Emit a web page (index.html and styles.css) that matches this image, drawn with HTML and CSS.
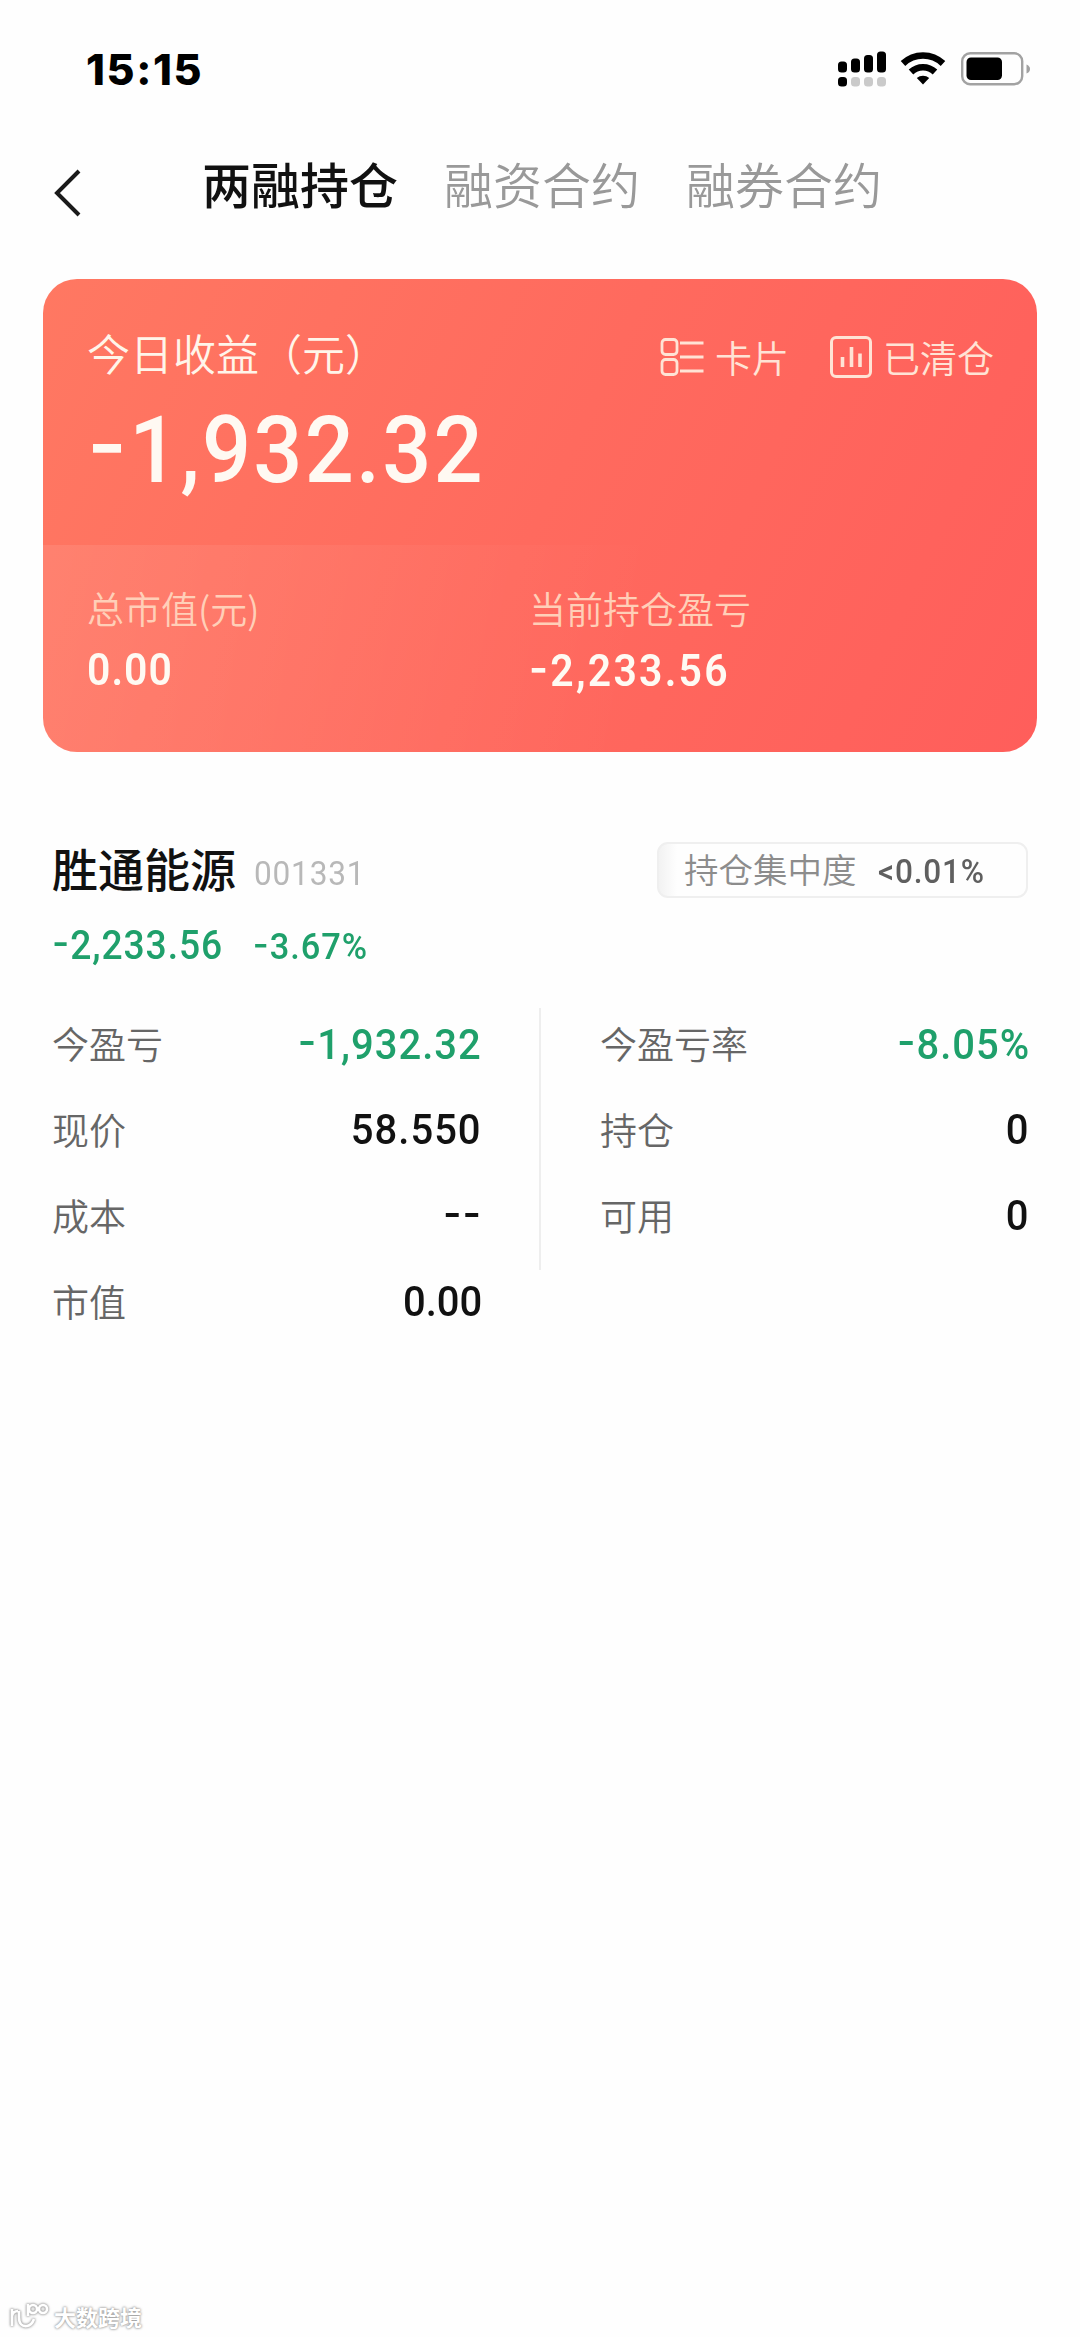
FILE: index.html
```html
<!DOCTYPE html>
<html lang="zh-CN">
<head>
  <meta charset="UTF-8">
  <meta name="viewport" content="width=device-width, initial-scale=1.0">
  <title>两融持仓</title>
  <link rel="stylesheet" href="styles.css">
</head>
<body>
  <!-- Status bar -->
  <header class="status-bar">
    <span class="time">15:15</span>
    <div class="status-icons">
      <svg class="signal" width="48" height="36" viewBox="0 0 48 36">
        <rect x="0" y="10.500" width="9" height="11" rx="3.500"/>
        <rect x="13" y="7.500" width="9" height="14" rx="3.500"/>
        <rect x="26" y="4" width="9" height="17.500" rx="3.500"/>
        <rect x="39" y="0.500" width="9" height="21" rx="3.500"/>
        <rect x="0" y="26" width="9" height="9.500" rx="3.500"/>
        <g fill="#cacaca">
          <rect x="13" y="26" width="9" height="9.500" rx="3.500"/>
          <rect x="26" y="26" width="9" height="9.500" rx="3.500"/>
          <rect x="39" y="26" width="9" height="9.500" rx="3.500"/>
        </g>
      </svg>
      <svg class="wifi" width="46" height="34" viewBox="0 0 46 34">
        <path d="M3 12.500a29 29 0 0 1 40 0M11 21a17.500 17.500 0 0 1 24 0" fill="none" stroke="#000" stroke-width="6.600"/>
        <path d="M16.800 27a9.500 9.500 0 0 1 12.400 0L23 33.500z"/>
      </svg>
      <svg class="battery" width="70" height="34" viewBox="0 0 70 34">
        <rect x="1.200" y="1.200" width="60" height="31" rx="8" fill="none" stroke="#a2a2a2" stroke-width="2.400"/>
        <rect x="5.500" y="5.500" width="35.500" height="22.500" rx="4.500"/>
        <path d="M65.500 12.500q3.500 1.500 3.500 4.500t-3.500 4.500z" fill="#a2a2a2"/>
      </svg>
    </div>
  </header>

  <!-- Nav tabs -->
  <nav class="nav">
    <svg class="back" width="28" height="48" viewBox="0 0 28 48">
      <path d="M25 2L3 24l22 22" fill="none" stroke="#1a1a1a" stroke-width="4"/>
    </svg>
    <div class="tabs">
      <span class="tab active">两融持仓</span>
      <span class="tab">融资合约</span>
      <span class="tab">融券合约</span>
    </div>
  </nav>

  <!-- Profit card -->
  <section class="card">
    <div class="card-top">
      <div class="card-head">
        <h1>今日收益（元）</h1>
        <div class="actions">
          <span class="action">
            <svg width="44" height="42" viewBox="0 0 44 42" fill="none" stroke="currentColor" stroke-width="2.800">
              <rect x="2" y="3.500" width="15" height="15" rx="3.500"/>
              <rect x="2" y="23.500" width="15" height="15" rx="3.500"/>
              <path d="M20 7h23.500M20 21h23.500M20 35h23.500"/>
            </svg>
            卡片
          </span>
          <span class="action">
            <svg width="42" height="42" viewBox="0 0 42 42" fill="none" stroke="currentColor" stroke-width="3">
              <rect x="1.500" y="1.500" width="39" height="39" rx="4.500"/>
              <path d="M12.500 21v10M21.500 11v20M30 17.500v13.500" stroke-width="3.600"/>
            </svg>
            已清仓
          </span>
        </div>
      </div>
      <div class="total num"><i>-</i>1,932.32</div>
    </div>
    <div class="card-bottom">
      <div class="stat">
        <span class="stat-label">总市值(元)</span>
        <span class="stat-value num">0.00</span>
      </div>
      <div class="stat">
        <span class="stat-label">当前持仓盈亏</span>
        <span class="stat-value num wide"><i>-</i>2,233.56</span>
      </div>
    </div>
  </section>

  <!-- Holding -->
  <section class="holding">
    <div class="holding-head">
      <h2>胜通能源</h2>
      <span class="code num">001331</span>
      <div class="badge">
        <span>持仓集中度</span>
        <span class="badge-value num">&lt;0.01%</span>
      </div>
    </div>
    <div class="holding-profit num">
      <span><i>-</i>2,233.56</span>
      <span class="rate"><i>-</i>3.67%</span>
    </div>
    <div class="details">
      <div class="column">
        <div class="row"><span>今盈亏</span><b class="num green"><i>-</i>1,932.32</b></div>
        <div class="row"><span>现价</span><b class="num">58.550</b></div>
        <div class="row"><span>成本</span><b class="num"><i>--</i></b></div>
        <div class="row"><span>市值</span><b class="num tight">0.00</b></div>
      </div>
      <div class="divider"></div>
      <div class="column">
        <div class="row"><span>今盈亏率</span><b class="num green"><i>-</i>8.05%</b></div>
        <div class="row"><span>持仓</span><b class="num">0</b></div>
        <div class="row"><span>可用</span><b class="num">0</b></div>
      </div>
    </div>
  </section>

  <!-- Watermark -->
  <footer class="watermark">
    <svg width="40" height="28" viewBox="0 0 40 28" fill="none" stroke="#fff" stroke-width="2.600">
      <path d="M2 7v17M2 14q1-5 6-5M9 9v6q0 10 8 9 5-1 7-7M18 2v12"/>
      <circle cx="23" cy="7" r="4"/>
      <circle cx="33" cy="7" r="4"/>
    </svg>
    <span>大数跨境</span>
  </footer>
</body>
</html>
```
FILE: styles.css
```css
* {
  box-sizing: border-box;
  margin: 0;
  padding: 0;
}

body {
  display: flex;
  flex-direction: column;
  width: 1080px;
  height: 2337px;
  background: #fefefe;
  font-family: "Noto Sans CJK SC", sans-serif;
  color: #111;
  overflow: hidden;
}

svg {
  display: block;
  flex-shrink: 0;
}

/* condensed digits */
.num {
  font-family: Roboto, sans-serif;
  letter-spacing: 0.025em;
  transform: scaleX(0.93);
  transform-origin: left;
}

/* wider minus sign than the digits' own font has */
.num i {
  font-family: Inter, sans-serif;
  font-style: normal;
  font-feature-settings: "case";
}

.num.wide {
  letter-spacing: 0.055em;
}

.num.tight {
  letter-spacing: 0;
}

/* Status bar */
.status-bar {
  display: flex;
  justify-content: space-between;
  height: 137px;
  padding: 51px 49px 0 86px;
}

.time {
  font-family: Inter, sans-serif;
  font-size: 43px;
  font-weight: 800;
  line-height: 36px;
  letter-spacing: 1.6px;
  color: #000;
}

.status-icons {
  display: flex;
}

.wifi {
  margin-left: 14px;
}

.battery {
  margin-left: 15px;
  margin-top: 1px;
}

/* Nav tabs */
.nav {
  display: flex;
  align-items: center;
  height: 112px;
  padding-left: 54px;
}

.tabs {
  display: flex;
  gap: 46px;
  margin-left: 120px;
  padding-bottom: 20px;
}

.tab {
  font-size: 49px;
  font-weight: 350;
  line-height: 60px;
  color: #999;
}

.tab.active {
  font-weight: 500;
  color: #111;
}

/* Profit card */
.card {
  height: 473px;
  margin: 30px 43px 0;
  border-radius: 34px;
  overflow: hidden;
  background: linear-gradient(115deg, #ff7862 0%, #ff6a5e 50%, #ff5e5b 100%);
  color: #fff5ea;
}

.card-top {
  height: 266px;
  padding: 43px 43px 0 44px;
}

.card-head {
  display: flex;
  justify-content: space-between;
}

h1 {
  font-size: 43px;
  font-weight: 350;
  line-height: 60px;
}

.actions {
  display: flex;
  gap: 41px;
  padding-top: 4px;
}

.action {
  display: flex;
  align-items: center;
  gap: 11px;
  height: 62px;
  font-size: 37px;
  font-weight: 350;
  color: #ffe3d5;
}

.total {
  margin-top: 10px;
  font-size: 93px;
  font-weight: 500;
  line-height: 100px;
  color: #fff9f2;
}

.card-bottom {
  display: flex;
  height: 207px;
  padding: 38px 44px 0;
  background: linear-gradient(100deg, rgba(255, 255, 255, 0.09), rgba(255, 255, 255, 0) 60%);
}

.stat {
  display: flex;
  flex-direction: column;
  width: 442px;
}

.stat-label {
  font-size: 37px;
  font-weight: 350;
  line-height: 50px;
  color: #ffcfb8;
}

.stat-value {
  margin-top: 12px;
  font-size: 44px;
  font-weight: 600;
  line-height: 50px;
  color: #fffaf3;
}

/* Holding */
.holding {
  padding: 86px 52px 0;
}

.holding-head {
  display: flex;
  align-items: center;
  height: 64px;
}

h2 {
  padding-bottom: 7px;
  font-size: 46px;
  font-weight: 500;
  line-height: 60px;
}

.code {
  margin-left: 18px;
  margin-top: 5px;
  font-size: 34px;
  color: #b8b8b8;
}

.badge {
  display: flex;
  align-items: center;
  width: 371px;
  height: 56px;
  margin-left: auto;
  padding-left: 25px;
  padding-bottom: 4px;
  border: 2px solid #efefef;
  border-radius: 11px;
  background: linear-gradient(90deg, #f2f2f2, #fefefe 18px);
  font-size: 34.500px;
  font-weight: 350;
  line-height: 46px;
  color: #8c8c8c;
}

.badge-value {
  margin-left: 21px;
  margin-top: 6px;
  font-size: 34px;
  font-weight: 500;
  color: #5f5f5f;
}

.holding-profit {
  display: flex;
  align-items: baseline;
  height: 50px;
  margin-top: 18px;
  font-size: 40px;
  font-weight: 500;
  line-height: 50px;
  color: #1fa06b;
}

.rate {
  margin-left: 32px;
  font-size: 37px;
}

.details {
  display: flex;
  margin-top: 38px;
}

.column {
  width: 428px;
}

.divider {
  width: 2px;
  height: 262px;
  margin: 0 59px;
  background: #eee;
}

.row {
  display: flex;
  justify-content: space-between;
  align-items: center;
  height: 86px;
  padding-bottom: 16px;
}

.row span {
  font-size: 37px;
  font-weight: 350;
  line-height: 50px;
  color: #666;
}

.row b {
  margin-right: -2px;
  font-size: 43px;
  font-weight: 500;
  line-height: 50px;
  transform-origin: right;
}

.row .green {
  color: #1fa06b;
}

/* Watermark */
.watermark {
  display: flex;
  align-items: center;
  gap: 4px;
  margin-top: auto;
  padding: 0 0 5px 10px;
  font-size: 22px;
  font-weight: 700;
  line-height: 32px;
  color: #fff;
  text-shadow: 0 0 2px #999, 0 0 3px #999;
}

.watermark svg {
  filter: drop-shadow(0 0 1px #999) drop-shadow(0 0 1px #bbb);
}
```
